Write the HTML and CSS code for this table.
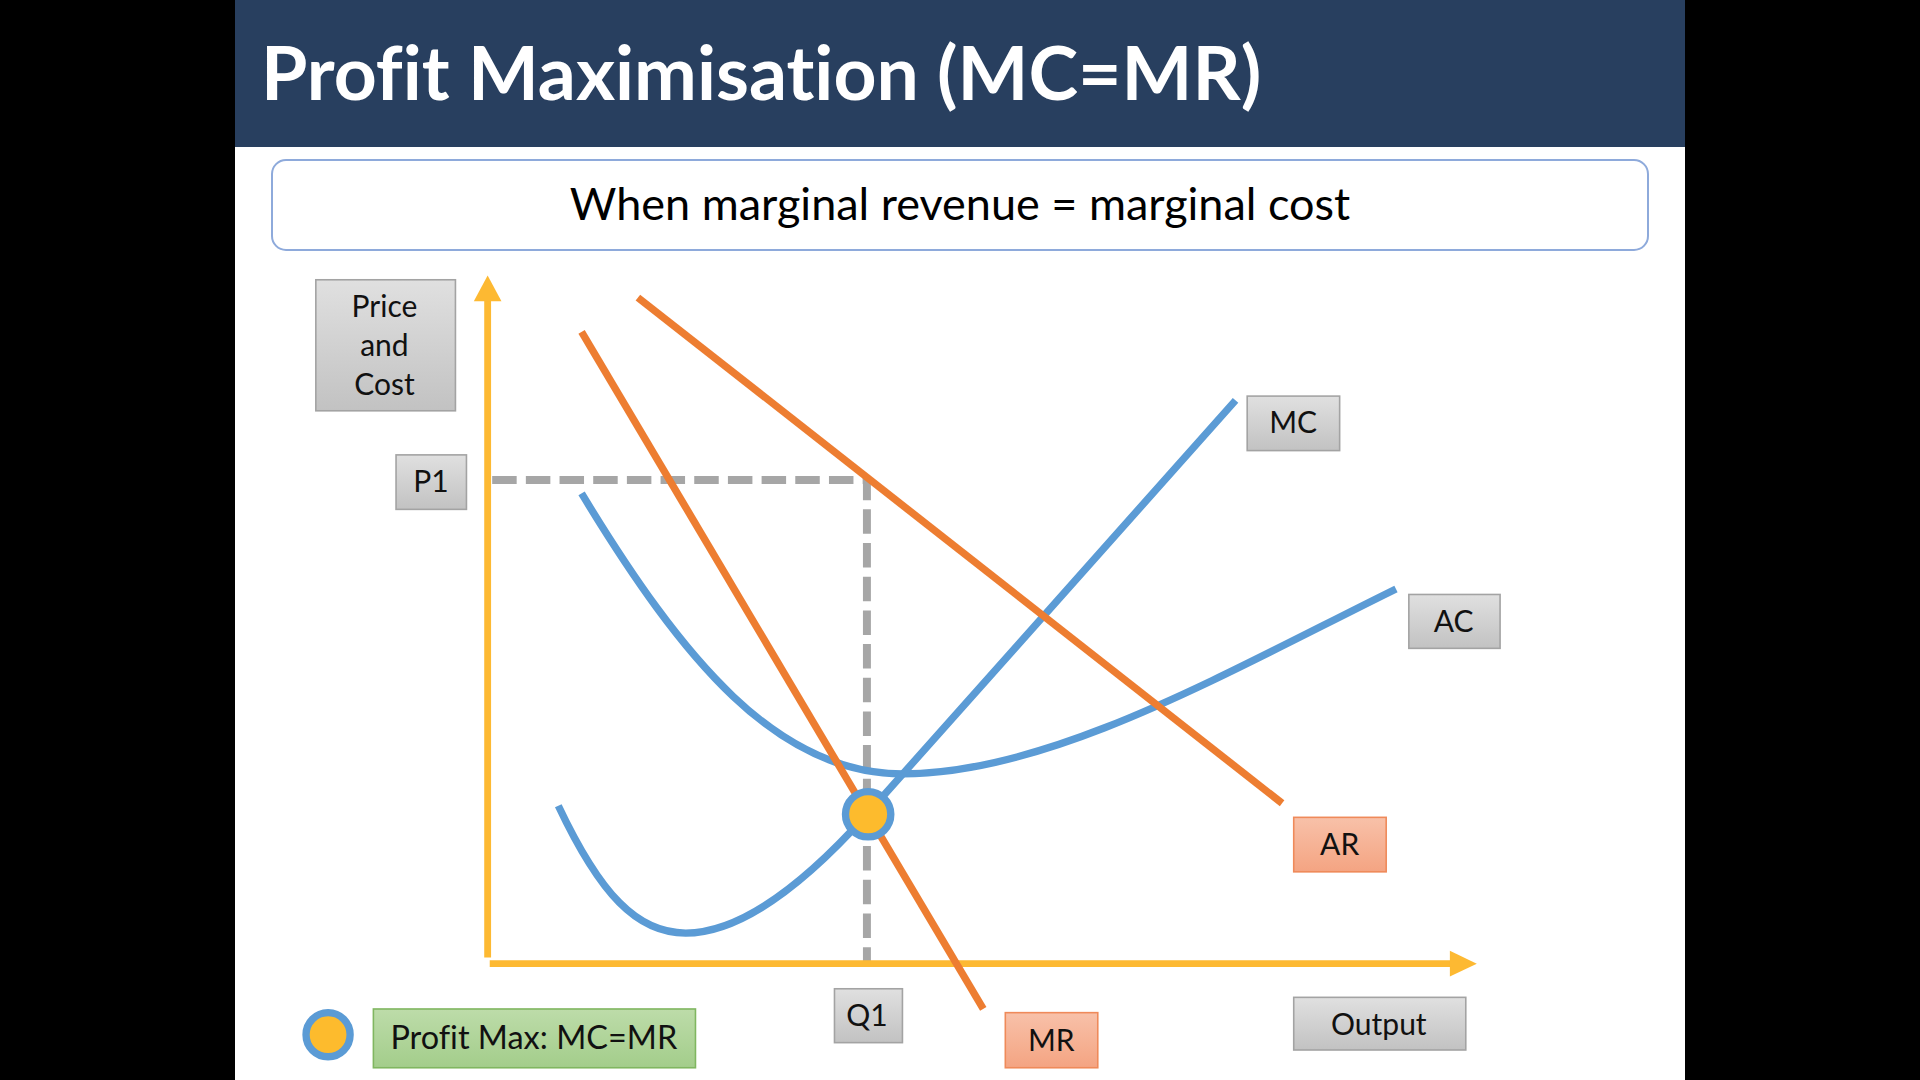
FILE: index.html
```html
<!DOCTYPE html>
<html lang="en">
<head>
<meta charset="utf-8">
<title>Profit Maximisation (MC=MR)</title>
<link rel="stylesheet" href="styles.css">
</head>
<body>
<div class="slide">
  <header class="title-bar">
    <h1 class="title">Profit Maximisation (MC=MR)</h1>
  </header>
  <div class="definition">When marginal revenue = marginal cost</div>
  <svg class="chart" viewBox="192 205 1184 677" preserveAspectRatio="none" xmlns="http://www.w3.org/2000/svg">
    <defs>
      <linearGradient id="gGray" x1="0" y1="0" x2="0" y2="1">
        <stop offset="0" stop-color="#e0e0e0"/>
        <stop offset="1" stop-color="#c2c2c2"/>
      </linearGradient>
      <linearGradient id="gSalmon" x1="0" y1="0" x2="0" y2="1">
        <stop offset="0" stop-color="#f8c1a9"/>
        <stop offset="1" stop-color="#f4a482"/>
      </linearGradient>
      <linearGradient id="gGreen" x1="0" y1="0" x2="0" y2="1">
        <stop offset="0" stop-color="#bddca9"/>
        <stop offset="1" stop-color="#a3cd8b"/>
      </linearGradient>
    </defs>

    <!-- dashed guides -->
    <path class="guide" d="M402,392 H708 V785"/>

    <!-- axes -->
    <line class="axis" x1="398.3" y1="782" x2="398.3" y2="243"/>
    <polygon class="axis-head" points="398.3,225 387,246 409.6,246"/>
    <line class="axis" x1="400" y1="787" x2="1187" y2="787"/>
    <polygon class="axis-head" points="1206,787 1184,776.5 1184,797.5"/>

    <!-- AC -->
    <path class="curve blue" d="M475,403 C558,540 635,632 737,632 C858,632 1000,550 1140,481"/>
    <!-- MC -->
    <path class="curve blue" d="M456,658 C490,730 520,762 560,762 C610,762 664,714 708,665 L1009,327"/>
    <!-- AR -->
    <line class="curve orange" x1="521" y1="243" x2="1047" y2="656"/>
    <!-- MR -->
    <line class="curve orange" x1="475" y1="271" x2="803" y2="824"/>

    <!-- profit max point -->
    <circle class="dot" cx="709" cy="665" r="18.5"/>

    <!-- labels -->
    <g class="label gray">
      <rect x="258" y="228.5" width="114" height="107"/>
      <text x="314" y="259">Price</text>
      <text x="314" y="291">and</text>
      <text x="314" y="323">Cost</text>
    </g>
    <g class="label gray">
      <rect x="323.5" y="371.5" width="57.5" height="44.5"/>
      <text x="352" y="402">P1</text>
    </g>
    <g class="label gray">
      <rect x="1018.5" y="323.5" width="75.5" height="44.5"/>
      <text x="1056" y="354">MC</text>
    </g>
    <g class="label gray">
      <rect x="1150.5" y="485.5" width="74.5" height="44"/>
      <text x="1187" y="516">AC</text>
    </g>
    <g class="label salmon">
      <rect x="1056.5" y="667.5" width="75.5" height="44.5"/>
      <text x="1094" y="698">AR</text>
    </g>
    <g class="label gray">
      <rect x="681.5" y="807.5" width="55.5" height="44"/>
      <text x="708" y="838">Q1</text>
    </g>
    <g class="label salmon">
      <rect x="821" y="827" width="75.5" height="45"/>
      <text x="858.5" y="858">MR</text>
    </g>
    <g class="label gray">
      <rect x="1056.5" y="814.5" width="140.5" height="43"/>
      <text x="1126" y="845">Output</text>
    </g>

    <!-- legend -->
    <circle class="dot" cx="268" cy="845" r="18"/>
    <g class="label green">
      <rect x="305" y="824" width="263" height="48"/>
      <text x="436" y="857">Profit Max: MC=MR</text>
    </g>
  </svg>
</div>
</body>
</html>
```

FILE: styles.css
```css
html, body {
  margin: 0;
  padding: 0;
  background: #000;
}

.slide {
  width: 1450px;
  height: 1080px;
  margin: 0 auto;
  background: #fff;
  display: flex;
  flex-direction: column;
  overflow: hidden;
  font-variant-ligatures: none;
}

.title-bar {
  height: 147px;
  flex: none;
  background: #283f5f;
  display: flex;
  align-items: center;
  padding-left: 26px;
  box-sizing: border-box;
}

.title {
  margin: 0;
  font-family: Lato, "Open Sans", sans-serif;
  font-weight: 700;
  font-size: 75px;
  line-height: 1;
  color: #fff;
  padding-bottom: 4px;
  font-variant-ligatures: none;
}

.definition {
  flex: none;
  height: 92px;
  margin: 12px 36px 0;
  box-sizing: border-box;
  border: 2px solid #8eaadb;
  border-radius: 15px;
  display: flex;
  align-items: center;
  justify-content: center;
  font-family: Lato, "Open Sans", sans-serif;
  font-size: 45px;
  color: #000;
  padding-bottom: 4px;
}

.chart {
  flex: 1;
  width: 1450px;
  display: block;
}

.guide {
  fill: none;
  stroke: #a6a6a6;
  stroke-width: 6.5;
  stroke-dasharray: 20 7.5;
}

.axis {
  stroke: #fdb932;
  stroke-width: 5.6;
}

.axis-head {
  fill: #fdb932;
}

.curve {
  fill: none;
  stroke-width: 6;
  stroke-linecap: butt;
}

.blue { stroke: #5b9bd5; }
.orange { stroke: #ed7d31; }

.dot {
  fill: #fdbb2d;
  stroke: #5b9bd5;
  stroke-width: 6;
}

.label rect {
  stroke-width: 1.3;
}

.label text {
  font-family: Lato, "Open Sans", sans-serif;
  font-size: 24.5px;
  fill: #111;
  text-anchor: middle;
}

.label.gray rect {
  fill: url(#gGray);
  stroke: #a3a3a3;
}

.label.salmon rect {
  fill: url(#gSalmon);
  stroke: #ef8a5a;
}

.label.green rect {
  fill: url(#gGreen);
  stroke: #80b660;
}

.label.green text {
  font-size: 26.5px;
}
```
